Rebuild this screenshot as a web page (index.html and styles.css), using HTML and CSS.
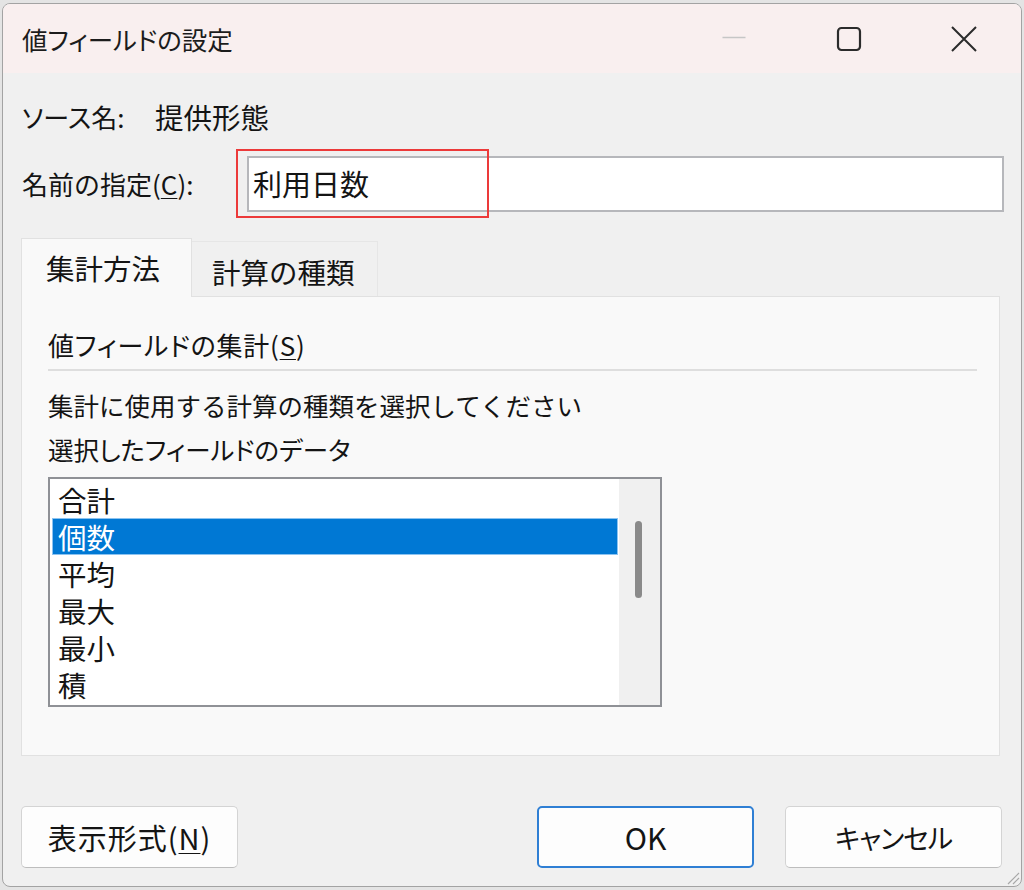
FILE: index.html
```html
<!DOCTYPE html>
<html lang="ja">
<head>
<meta charset="utf-8">
<title>値フィールドの設定</title>
<link rel="stylesheet" href="styles.css">
</head>
<body>
<div class="window">
  <div class="titlebar">
    <div class="title">値フィールドの設定</div>
    <div class="caption">
      <div class="cbtn"><svg width="24" height="24" viewBox="0 0 24 24"><line x1="0.5" y1="10.5" x2="23.5" y2="10.5" stroke="#c6c6c6" stroke-width="1.6"/></svg></div>
      <div class="cbtn"><svg width="26" height="26" viewBox="0 0 26 26"><rect x="2" y="2" width="22" height="22" rx="3.5" fill="none" stroke="#2b2b2b" stroke-width="2.2"/></svg></div>
      <div class="cbtn"><svg width="26" height="26" viewBox="0 0 26 26"><path d="M1 1 L25 25 M25 1 L1 25" stroke="#2b2b2b" stroke-width="2"/></svg></div>
    </div>
  </div>
  <div class="content">
    <div class="source-row">
      <span class="src-label">ソース名:</span>
      <span class="src-value">提供形態</span>
    </div>
    <div class="name-row">
      <span class="name-label">名前の指定(<u>C</u>):</span>
      <div class="field">
        <div class="input">利用日数</div>
        <div class="mark"></div>
      </div>
    </div>
    <div class="tabs">
      <div class="tab tab-active">集計方法</div>
      <div class="tab tab-idle">計算の種類</div>
    </div>
    <div class="panel">
      <div class="heading">値フィールドの集計(<u>S</u>)</div>
      <div class="sep"></div>
      <div class="desc desc1">集計に使用する計算の種類を選択してください</div>
      <div class="desc desc2">選択したフィールドのデータ</div>
      <div class="listbox">
        <div class="items">
          <div class="item">合計</div>
          <div class="item selected">個数</div>
          <div class="item">平均</div>
          <div class="item">最大</div>
          <div class="item">最小</div>
          <div class="item">積</div>
        </div>
        <div class="scrollbar"><div class="thumb"></div></div>
      </div>
    </div>
    <div class="buttons">
      <div class="btn btn-format">表示形式(<u>N</u>)</div>
      <div class="spacer"></div>
      <div class="btn btn-default">OK</div>
      <div class="btn btn-cancel">キャンセル</div>
    </div>
  </div>
  <svg class="grip" width="16" height="16" viewBox="0 0 16 16"><path d="M15 4 L4 15 M15 9 L9 15" stroke="#a8a8a8" stroke-width="1.2"/></svg>
</div>
</body>
</html>
```

FILE: styles.css
```css
html, body {
  margin: 0;
  padding: 0;
}
body {
  background: #e4e4e4;
  font-family: "Noto Sans CJK JP", "Noto Sans", sans-serif;
  color: #141414;
}
u {
  text-decoration-thickness: 1px;
  text-underline-offset: 3px;
}
.window {
  box-sizing: border-box;
  position: relative;
  margin: 3px 2px 0 2px;
  width: 1020px;
  height: 884px;
  border: 1px solid #a3a3a3;
  border-radius: 8px;
  background: #f0f0f0;
  overflow: hidden;
  display: flex;
  flex-direction: column;
}
.titlebar {
  flex: none;
  height: 69px;
  background: #f9efef;
  display: flex;
  align-items: center;
}
.title {
  flex: 1;
  padding-left: 19px;
  font-size: 25.5px;
  font-feature-settings: "palt";
  color: #1c1c1c;
}
.caption {
  display: flex;
  height: 100%;
}
.cbtn {
  width: 115px;
  display: flex;
  align-items: center;
  justify-content: center;
}
.content {
  display: flex;
  flex-direction: column;
  padding: 26px 21px 0 18px;
}
.source-row {
  height: 36px;
  line-height: 36px;
  display: flex;
  align-items: center;
  padding-left: 1px;
}
.src-label {
  width: 133px;
  font-size: 26px;
  font-feature-settings: "palt";
}
.src-value {
  font-size: 28.5px;
}
.name-row {
  margin-top: 21px;
  height: 56px;
  display: flex;
  align-items: center;
  padding-left: 1px;
}
.name-label {
  width: 225px;
  font-size: 26px;
  line-height: 36px;
}
.field {
  position: relative;
  flex: 1;
  margin-right: -4px;
}
.input {
  box-sizing: border-box;
  height: 56px;
  border: 2px solid #b6b7bb;
  background: #fff;
  font-size: 29px;
  line-height: 50px;
  padding-left: 4px;
}
.mark {
  position: absolute;
  left: -11px;
  top: -7px;
  width: 253px;
  height: 69px;
  box-sizing: border-box;
  border: 2px solid #ec3a3a;
}
.tabs {
  margin-top: 26px;
  height: 58px;
  display: flex;
  align-items: flex-end;
}
.tab {
  box-sizing: border-box;
  font-size: 28.5px;
  display: flex;
  align-items: center;
}
.tab-active {
  position: relative;
  z-index: 1;
  width: 171px;
  height: 59px;
  margin-bottom: -1px;
  padding-left: 24px;
  padding-bottom: 1px;
  background: #f9f9f9;
  border: 1px solid #e1e1e1;
  border-bottom: none;
}
.tab-idle {
  width: 186px;
  height: 55px;
  padding-left: 20px;
  padding-top: 4px;
  background: #f0f0f0;
  border: 1px solid #e6e6e6;
  border-left: none;
  border-bottom: none;
}
.panel {
  box-sizing: border-box;
  height: 460px;
  background: #f9f9f9;
  border: 1px solid #e1e1e1;
  padding: 30px 22px 0 26px;
}
.heading {
  font-size: 26px;
  line-height: 36px;
  letter-spacing: 0.8px;
  font-feature-settings: "palt";
}
.sep {
  margin-top: 6px;
  height: 2px;
  background: #dedede;
}
.desc {
  font-size: 25.5px;
  line-height: 36px;
}
.desc1 {
  margin-top: 16px;
}
.desc2 {
  margin-top: 8px;
  font-feature-settings: "palt";
}
.listbox {
  box-sizing: border-box;
  margin-top: 10px;
  width: 614px;
  height: 230px;
  border: 2px solid #8f9196;
  background: #fff;
  display: flex;
}
.items {
  flex: 1;
  padding: 2px 1px 0 2px;
}
.item {
  height: 37px;
  line-height: 37px;
  font-size: 28.5px;
  padding-left: 6px;
}
.item.selected {
  background: #0078d4;
  color: #fff;
  box-shadow: inset 0 0 0 1px #8cc3f0;
}
.scrollbar {
  width: 41px;
  background: #f0f0f0;
  padding-top: 42px;
  box-sizing: border-box;
}
.thumb {
  margin-left: 16px;
  width: 7px;
  height: 77px;
  border-radius: 3.5px;
  background: #8a8a8a;
}
.buttons {
  margin-top: 50px;
  height: 62px;
  display: flex;
  margin-right: -2px;
}
.spacer {
  flex: 1;
}
.btn {
  box-sizing: border-box;
  width: 217px;
  height: 62px;
  border: 1px solid #d4d4d4;
  border-bottom-color: #bdbdbd;
  border-radius: 5px;
  background: #fdfdfd;
  font-size: 27px;
  display: flex;
  align-items: center;
  justify-content: center;
}
.btn-format {
  font-size: 29px;
  letter-spacing: 1px;
}
.btn-default {
  border: 2px solid #2f7fd4;
  font-size: 30px;
}
.btn-cancel {
  margin-left: 31px;
  font-feature-settings: "palt";
  letter-spacing: -1px;
}
.grip {
  position: absolute;
  right: 1px;
  bottom: 1px;
}
```
